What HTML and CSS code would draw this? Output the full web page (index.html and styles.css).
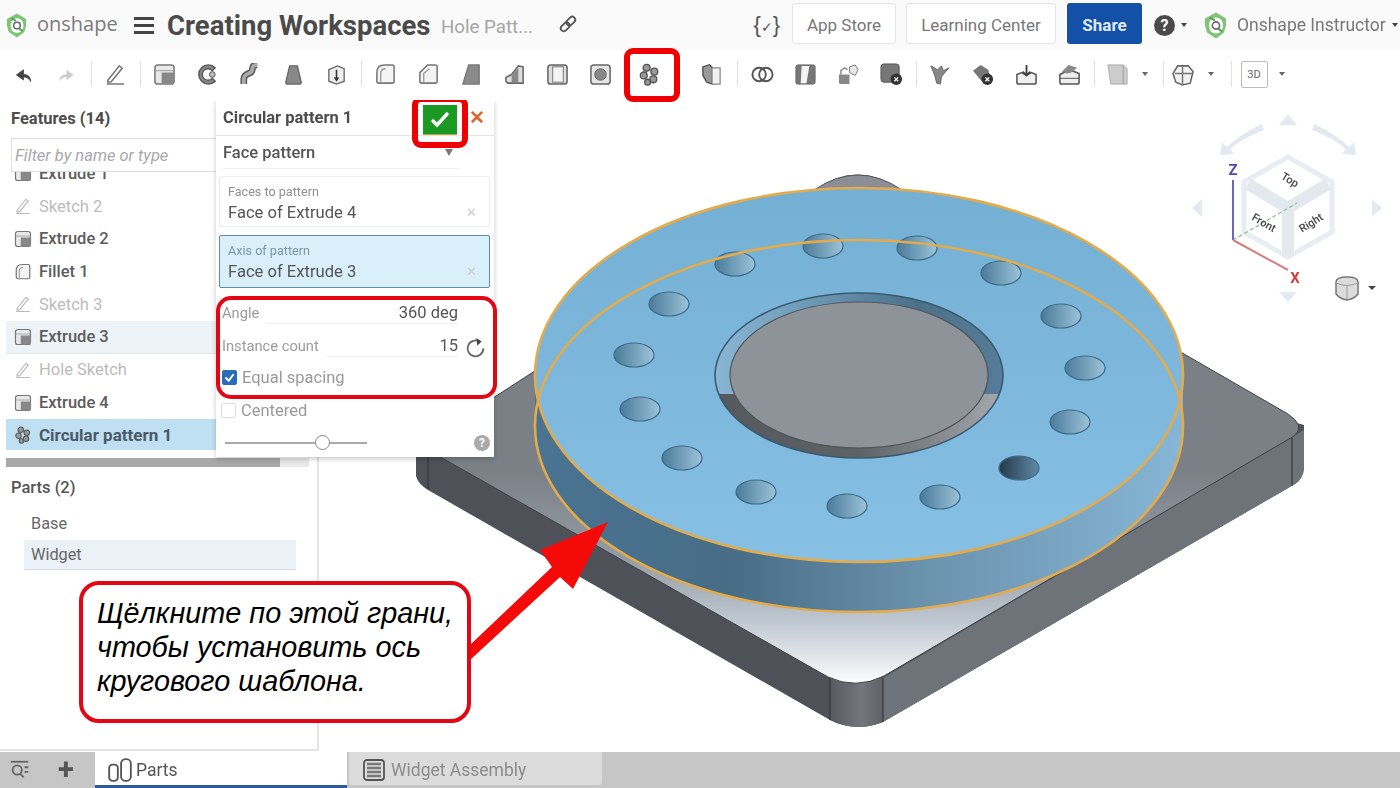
FILE: index.html
```html
<!DOCTYPE html>
<html lang="en">
<head>
<meta charset="utf-8">
<title>Creating Workspaces</title>
<link rel="stylesheet" href="styles.css">
</head>
<body>
<svg class="defs" width="0" height="0" aria-hidden="true">
  <defs>
    <symbol id="logo" viewBox="0 0 24 28">
      <path d="M12 1 22 7v7l-2 7-8 6-9-6-2-7V7z" fill="#7cc576"/>
      <path d="M12 6c-4 0-7 3-7 8s3 8 7 8 7-3 7-8-3-8-7-8z" fill="#fff"/>
      <circle cx="12" cy="14" r="3.6" fill="none" stroke="#666" stroke-width="1.6"/>
      <path d="M6 6l5 3M18 20l-4-3" stroke="#4c9a48" stroke-width="2"/>
    </symbol>
    <symbol id="i-sketch" viewBox="0 0 24 24"><path d="M4 18 16 3l3 2.5L7.5 19.5 4 20zM3 22h18" fill="none" stroke="#777" stroke-width="1.6"/></symbol>
    <symbol id="i-extrude" viewBox="0 0 24 24"><rect x="2" y="2" width="20" height="20" rx="3" fill="#e8e8e8" stroke="#777" stroke-width="1.6"/><path d="M9 10h13v10a2 2 0 0 1-2 2H9z" fill="#888"/><path d="M2 8h20" stroke="#999"/></symbol>
    <symbol id="i-revolve" viewBox="0 0 24 24"><path d="M20 5a10 10 0 1 0 0 14l-3-3a6 6 0 1 1 0-8z" fill="#888" stroke="#555" stroke-width="1.4"/><circle cx="17" cy="12" r="3" fill="#bbb" stroke="#555"/></symbol>
    <symbol id="i-sweep" viewBox="0 0 24 24"><path d="M5 22v-5c0-3 2-5 5-6s4-2 4-5 2-4 5-4" fill="none" stroke="#555" stroke-width="7"/><path d="M5 22v-5c0-3 2-5 5-6s4-2 4-5 2-4 5-4" fill="none" stroke="#aaa" stroke-width="4"/></symbol>
    <symbol id="i-loft" viewBox="0 0 24 24"><path d="M8 3h8l4 17a2 2 0 0 1-2 2H6a2 2 0 0 1-2-2z" fill="#888" stroke="#666" stroke-width="1.4"/></symbol>
    <symbol id="i-thicken" viewBox="0 0 24 24"><path d="M4 7l9-4 7 3v13l-8 3-8-3z" fill="#eee" stroke="#666" stroke-width="1.4"/><path d="M12 7v10M10 15l2 3 2-3" fill="none" stroke="#333" stroke-width="1.6"/></symbol>
    <symbol id="i-fillet" viewBox="0 0 24 24"><path d="M3 19V10q0-8 8-8h8a2 2 0 0 1 2 2v15a2 2 0 0 1-2 2H5a2 2 0 0 1-2-2z" fill="#f4f4f4" stroke="#777" stroke-width="1.6"/><path d="M7 21v-10q0-5 5-5" fill="none" stroke="#999" stroke-width="1.4"/></symbol>
    <symbol id="i-chamfer" viewBox="0 0 24 24"><path d="M3 19V10l8-8h8a2 2 0 0 1 2 2v15a2 2 0 0 1-2 2H5a2 2 0 0 1-2-2z" fill="#f4f4f4" stroke="#777" stroke-width="1.6"/><path d="M7 21V11l6-5" fill="none" stroke="#999" stroke-width="1.4"/></symbol>
    <symbol id="i-draft" viewBox="0 0 24 24"><path d="M9 2h11v20H3z" fill="#8a8a8a" stroke="#777" stroke-width="1.4"/></symbol>
    <symbol id="i-rib" viewBox="0 0 24 24"><path d="M3 15l6-3 7-9 5 1v17H5l-2-2z" fill="#ddd" stroke="#666" stroke-width="1.6"/><path d="M9 20V13l7-8v15z" fill="#888"/></symbol>
    <symbol id="i-shell" viewBox="0 0 24 24"><rect x="2" y="2" width="20" height="20" rx="3" fill="#ddd" stroke="#666" stroke-width="1.6"/><rect x="7" y="4" width="11" height="16" fill="#f4f4f4" stroke="#777"/></symbol>
    <symbol id="i-hole" viewBox="0 0 24 24"><rect x="2" y="2" width="20" height="20" rx="3" fill="#e6e6e6" stroke="#666" stroke-width="1.6"/><circle cx="12" cy="12" r="6" fill="#888" stroke="#666"/></symbol>
    <symbol id="i-pattern" viewBox="0 0 24 24"><g fill="#999" stroke="#555" stroke-width="1.4"><circle cx="9" cy="5" r="3.6"/><circle cx="17" cy="9" r="3.6"/><circle cx="6" cy="13" r="3.6"/><circle cx="16" cy="17" r="3.6"/><circle cx="10" cy="20" r="3"/></g></symbol>
    <symbol id="i-modify" viewBox="0 0 24 24"><path d="M3 4l7-2 3 3v17l-6-2-4-7z" fill="#999" stroke="#555" stroke-width="1.5"/><path d="M13 5h8v17h-8" fill="#f2f2f2" stroke="#888" stroke-width="1.3"/></symbol>
    <symbol id="i-bool" viewBox="0 0 24 24"><circle cx="8.500" cy="12" r="7" fill="#fff" stroke="#555" stroke-width="2"/><circle cx="15.500" cy="12" r="7" fill="none" stroke="#555" stroke-width="2"/></symbol>
    <symbol id="i-split" viewBox="0 0 24 24"><rect x="2" y="2" width="20" height="20" rx="2" fill="#777" stroke="#666"/><path d="M8 3h8l-3 18H7z" fill="#f5f5f5"/></symbol>
    <symbol id="i-transform" viewBox="0 0 24 24"><path d="M2 12h11v10H4a2 2 0 0 1-2-2z" fill="#888"/><path d="M13 4l6-2 3 5-3 6-6-3z" fill="#e8e8e8" stroke="#777"/><path d="M4 12V8l4-3 3 2" fill="none" stroke="#888" stroke-width="1.5"/></symbol>
    <symbol id="i-delete" viewBox="0 0 24 24"><rect x="1" y="1" width="19" height="19" rx="3" fill="#777" stroke="#555"/><circle cx="17" cy="17" r="6" fill="#333"/><path d="M15 15l4 4m0-4-4 4" stroke="#fff" stroke-width="1.4"/></symbol>
    <symbol id="i-moveface" viewBox="0 0 24 24"><path d="M2 3l7 4 4-4 2 5 6-3-8 9-1 8-4-1-2-8z" fill="#888" stroke="#666"/></symbol>
    <symbol id="i-delface" viewBox="0 0 24 24"><path d="M1 8l8-6 8 5 2 7-8 6z" fill="#777"/><circle cx="16" cy="17" r="6" fill="#333"/><path d="M14 15l4 4m0-4-4 4" stroke="#fff" stroke-width="1.4"/></symbol>
    <symbol id="i-replace" viewBox="0 0 24 24"><path d="M2 12l5-2 5 3 5-3 5 2v8a2 2 0 0 1-2 2H4a2 2 0 0 1-2-2z" fill="#f0f0f0" stroke="#555" stroke-width="1.6"/><path d="M12 2v10M8 9l4 4 4-4" fill="none" stroke="#444" stroke-width="2"/></symbol>
    <symbol id="i-offset" viewBox="0 0 24 24"><path d="M2 12l10-5 10 4v9a2 2 0 0 1-2 2H4a2 2 0 0 1-2-2z" fill="#eee" stroke="#555" stroke-width="1.6"/><path d="M4 9l7-7 9 3-6 5-5 1z" fill="#888"/><path d="M2 16h20" stroke="#555"/></symbol>
    <symbol id="i-plane" viewBox="0 0 24 24"><path d="M2 2h16l4 4v16H5z" fill="#ccc" stroke="#aaa"/><path d="M18 2v20" stroke="#999"/></symbol>
    <symbol id="i-mate" viewBox="0 0 24 24"><path d="M6 3h11l5 6-3 12-8 2-7-3-3-9z" fill="#f2f2f2" stroke="#666" stroke-width="1.6"/><path d="M11 3v20M3 11h18" stroke="#777" stroke-width="1.5"/></symbol>
    <symbol id="i-parts" viewBox="0 0 24 24"><rect x="2" y="7" width="8" height="15" rx="3" fill="#fff" stroke="#555" stroke-width="1.7"/><rect x="13" y="2" width="9" height="20" rx="4" fill="#fff" stroke="#555" stroke-width="1.7"/></symbol>
    <symbol id="i-assembly" viewBox="0 0 24 24"><rect x="2" y="2" width="20" height="20" rx="3" fill="#ddd" stroke="#555" stroke-width="1.8"/><path d="M5 6h14M5 10h14M5 14h14M5 18h14" stroke="#777" stroke-width="2.500"/></symbol>
  </defs>
</svg>

<div class="page">
  <div class="app">
    <header class="topbar">
      <svg class="brand-logo"><use href="#logo"/></svg>
      <span class="brand-name">onshape</span>
      <div class="burger"><i></i><i></i><i></i></div>
      <h1 class="doc-title">Creating Workspaces</h1>
      <span class="doc-sub">Hole Patt...</span>
      <svg class="link-icon" viewBox="0 0 20 20"><g fill="none" stroke="#555" stroke-width="1.8" transform="rotate(-45 10 10)"><rect x="1" y="7" width="10" height="6" rx="3"/><rect x="9" y="7" width="10" height="6" rx="3"/></g></svg>
      <span class="spacer"></span>
      <span class="vars">{<b>✓</b>}</span>
      <a class="btn btn-store">App Store</a>
      <a class="btn btn-learn">Learning Center</a>
      <a class="btn btn-share">Share</a>
      <span class="help">?</span>
      <span class="tri tri-help"></span>
      <svg class="user-logo"><use href="#logo"/></svg>
      <span class="user-name">Onshape Instructor</span>
      <span class="tri tri-user"></span>
    </header>

    <nav class="toolbar">
      <div class="tool"><svg class="ico-s" viewBox="0 0 24 24"><path d="M21 21c0-6-3-9-9-9V6L3 12.500l9 6.500v-4c4 0 7 2 9 5.500z" fill="#444" stroke="#444"/></svg></div>
      <div class="tool"><svg class="ico-s" viewBox="0 0 24 24"><path d="M3 21c0-6 3-9 9-9V6l9 6.500-9 6.500v-4c-4 0-7 2-9 5.500z" fill="#ccc"/></svg></div>
      <span class="sep"></span>
      <div class="tool"><svg class="ico"><use href="#i-sketch"/></svg></div>
      <span class="sep"></span>
      <div class="tool"><svg class="ico"><use href="#i-extrude"/></svg></div>
      <div class="tool"><svg class="ico"><use href="#i-revolve"/></svg></div>
      <div class="tool"><svg class="ico"><use href="#i-sweep"/></svg></div>
      <div class="tool"><svg class="ico"><use href="#i-loft"/></svg></div>
      <div class="tool"><svg class="ico"><use href="#i-thicken"/></svg></div>
      <span class="sep"></span>
      <div class="tool"><svg class="ico"><use href="#i-fillet"/></svg></div>
      <div class="tool"><svg class="ico"><use href="#i-chamfer"/></svg></div>
      <div class="tool"><svg class="ico"><use href="#i-draft"/></svg></div>
      <div class="tool"><svg class="ico"><use href="#i-rib"/></svg></div>
      <div class="tool"><svg class="ico"><use href="#i-shell"/></svg></div>
      <div class="tool"><svg class="ico"><use href="#i-hole"/></svg></div>
      <div class="tool tool-marked"><svg class="ico"><use href="#i-pattern"/></svg><span class="mark mark-tool"></span></div>
      <div class="tool tool-after"><svg class="ico"><use href="#i-modify"/></svg></div>
      <span class="sep sep-wide"></span>
      <div class="tool"><svg class="ico"><use href="#i-bool"/></svg></div>
      <div class="tool"><svg class="ico"><use href="#i-split"/></svg></div>
      <div class="tool"><svg class="ico"><use href="#i-transform"/></svg></div>
      <div class="tool"><svg class="ico"><use href="#i-delete"/></svg></div>
      <span class="sep"></span>
      <div class="tool"><svg class="ico"><use href="#i-moveface"/></svg></div>
      <div class="tool"><svg class="ico"><use href="#i-delface"/></svg></div>
      <div class="tool"><svg class="ico"><use href="#i-replace"/></svg></div>
      <div class="tool"><svg class="ico"><use href="#i-offset"/></svg></div>
      <span class="sep"></span>
      <div class="tool tool-s tool-gap"><svg class="ico"><use href="#i-plane"/></svg></div>
      <div class="drop"><span class="tri"></span></div>
      <span class="sep sep-tight"></span>
      <div class="tool tool-s"><svg class="ico"><use href="#i-mate"/></svg></div>
      <div class="drop"><span class="tri"></span></div>
      <span class="sep sep-3d"></span>
      <div class="tool tool-s tool-gap"><span class="btn-3d">3D</span></div>
      <div class="drop"><span class="tri"></span></div>
    </nav>

    <main class="workspace">
      <svg class="model" viewBox="0 100 1400 652" width="1400" height="652">
        <defs>
          <linearGradient id="plateTop" x1="0" y1="470" x2="0" y2="684" gradientUnits="userSpaceOnUse">
            <stop offset="0" stop-color="#7b8087"/><stop offset=".42" stop-color="#959ca5"/><stop offset=".72" stop-color="#c2cad3"/><stop offset="1" stop-color="#fdfeff"/>
          </linearGradient>
          <linearGradient id="plateCorner" x1="0" x2="1" y1="0" y2="0">
            <stop offset="0" stop-color="#565a5f"/><stop offset=".6" stop-color="#73777c"/><stop offset="1" stop-color="#5d6166"/>
          </linearGradient>
          <linearGradient id="wall" x1="535" x2="1183" y1="0" y2="0" gradientUnits="userSpaceOnUse">
            <stop offset="0" stop-color="#4a7492"/><stop offset=".3" stop-color="#476c86"/><stop offset=".6" stop-color="#6b92ad"/><stop offset="1" stop-color="#86b6d6"/>
          </linearGradient>
          <linearGradient id="face" x1="0" y1="190" x2="0" y2="562" gradientUnits="userSpaceOnUse">
            <stop offset="0" stop-color="#74afd4"/><stop offset="1" stop-color="#86c0e4"/>
          </linearGradient>
          <linearGradient id="hole" x1="0" x2="1" y1="0" y2="0">
            <stop offset="0" stop-color="#4a7b99"/><stop offset="1" stop-color="#9cc3da"/>
          </linearGradient>
          <linearGradient id="holeDark" x1="0" x2="1" y1="0" y2="0">
            <stop offset="0" stop-color="#24394a"/><stop offset="1" stop-color="#5f8aa5"/>
          </linearGradient>
          <linearGradient id="bore" x1="715" x2="1003" y1="0" y2="0" gradientUnits="userSpaceOnUse">
            <stop offset="0" stop-color="#8ab6d3"/><stop offset=".3" stop-color="#6f9cb9"/><stop offset=".7" stop-color="#4c7089"/><stop offset="1" stop-color="#557c98"/>
          </linearGradient>
          <linearGradient id="boreLow" x1="715" x2="1003" y1="0" y2="0" gradientUnits="userSpaceOnUse">
            <stop offset="0" stop-color="#55595d"/><stop offset=".5" stop-color="#5d6267"/><stop offset="1" stop-color="#a6a9ad"/>
          </linearGradient>
          <clipPath id="boreClip"><ellipse cx="859" cy="375.500" rx="144" ry="82.500"/></clipPath>
        </defs>
        <path d="M416 440V476Q418 484 428 490L830 720Q856 733 883 722L1295 484Q1304 478 1304 466V425L860 300Z" fill="#4e5258"/>
        <path d="M883 678L1304 430V466Q1304 478 1295 484L883 722Z" fill="#6e7379"/>
        <path d="M830 678H883V722Q856 733 830 720Z" fill="url(#plateCorner)"/>
        <path d="M428 450V489M830 678V720M883 678V722M1292 438V486" stroke="#34383c" stroke-width="1.200" fill="none"/>
        <path d="M428 440L815 190Q858 160 900 190L1288 414Q1306 426 1294 436L884 676Q856 690 828 677L428 450Z" fill="url(#plateTop)" stroke="#3e4246" stroke-width="1"/>
        <path d="M814 190Q858 160 902 190Z" fill="#8b8f95" stroke="#55595e"/>
        <path d="M535 375V426A324 186 0 0 0 1183 426V375Z" fill="url(#wall)"/>
        <ellipse cx="859" cy="375" rx="324" ry="187" fill="url(#face)"/>
        <ellipse cx="859" cy="375.500" rx="144" ry="82.500" fill="url(#bore)"/>
        <path d="M726 405Q790 470 860 460T992 405Q1010 460 860 470T726 405Z" fill="url(#boreLow)" clip-path="url(#boreClip)"/>
        <rect x="715" y="394" width="290" height="70" fill="url(#boreLow)" clip-path="url(#boreClip)"/>
        <ellipse cx="859" cy="375.500" rx="144" ry="82.500" fill="none" stroke="#3a5a70" stroke-width="1.600"/>
        <ellipse cx="859" cy="375" rx="129" ry="73" fill="#8e9399" stroke="#50555a" stroke-width="1.200"/>
        <g fill="url(#hole)" stroke="#3d6a85" stroke-width="1.200">
          <ellipse cx="823" cy="246" rx="20" ry="12"/><ellipse cx="917" cy="248" rx="20" ry="12"/>
          <ellipse cx="1001" cy="273" rx="20" ry="12"/><ellipse cx="1061" cy="316" rx="20" ry="12"/>
          <ellipse cx="1085" cy="368" rx="20" ry="12"/><ellipse cx="1070" cy="422" rx="20" ry="12"/>
          <ellipse cx="1019" cy="468" rx="20" ry="12" fill="url(#holeDark)"/><ellipse cx="940" cy="497" rx="20" ry="12"/>
          <ellipse cx="847" cy="506" rx="20" ry="12"/><ellipse cx="756" cy="492" rx="20" ry="12"/>
          <ellipse cx="682" cy="458" rx="20" ry="12"/><ellipse cx="640" cy="409" rx="20" ry="12"/>
          <ellipse cx="634" cy="355" rx="20" ry="12"/><ellipse cx="669" cy="304" rx="20" ry="12"/>
          <ellipse cx="735" cy="264" rx="20" ry="12"/>
        </g>
        <g fill="none" stroke="#e3ab4c" stroke-width="2.600">
          <ellipse cx="859" cy="375" rx="324" ry="187"/>
          <ellipse cx="859" cy="426" rx="324" ry="186"/>
        </g>

        <g class="cube">
          <path d="M1288 114l9 11h-18zM1202 199v18l-10-9zM1372 199v18l10 -9zM1279 292h18l-9 10z" fill="#e3e9f0"/>
          <path d="M1262 124q-22 10-35 23l-5 -5-2 13 14-1-4-5q13-11 34-19zM1314 124q22 10 35 23l5-5 2 13-14-1 4-5q-13-11-34-19z" fill="#e3e9f0"/>
          <path d="M1288 157l44 25v50l-44 25-44-25v-50z" fill="#fff" stroke="#e8edf3" stroke-width="5" stroke-linejoin="round"/>
          <path d="M1288 208l-40-24M1288 208l40-24M1288 208v48" stroke="#e3e9ef" stroke-width="12" fill="none"/>
          <path d="M1233 240L1297 203" stroke="#7dc87d" stroke-width="1.200" stroke-dasharray="4 2.500"/>
          <path d="M1233 180V240" stroke="#6668c0" stroke-width="2"/>
          <path d="M1233 240L1288 270" stroke="#d88080" stroke-width="2"/>
          <text x="1233" y="175" class="axis axis-z">Z</text>
          <text x="1295" y="283" class="axis axis-x">X</text>
          <text class="cube-label" transform="translate(1288 183) rotate(32)">Top</text>
          <text class="cube-label" transform="translate(1262 226) rotate(30)">Front</text>
          <text class="cube-label" transform="translate(1313 226) rotate(-32)">Right</text>
          <path d="M1347 277q11 0 11 5v12q-4 5-11 6-7-1-11-6v-12q0-5 11-5z" fill="#dcdcdc" stroke="#777" stroke-width="1.500"/>
          <path d="M1336 283q11 5 22 0M1347 286v13" stroke="#999" fill="none"/>
          <path d="M1368 286h8l-4 4z" fill="#444"/>
        </g>
      </svg>

      <aside class="features">
        <div class="panel-title">Features (14)</div>
        <div class="filter">Filter by name or type</div>
        <ul class="tree">
          <li class="row row-clip"><svg class="row-ico"><use href="#i-extrude"/></svg>Extrude 1</li>
          <li class="row row-off"><svg class="row-ico"><use href="#i-sketch"/></svg>Sketch 2</li>
          <li class="row"><svg class="row-ico"><use href="#i-extrude"/></svg>Extrude 2</li>
          <li class="row"><svg class="row-ico"><use href="#i-fillet"/></svg>Fillet 1</li>
          <li class="row row-off"><svg class="row-ico"><use href="#i-sketch"/></svg>Sketch 3</li>
          <li class="row row-hover"><svg class="row-ico"><use href="#i-extrude"/></svg>Extrude 3</li>
          <li class="row row-off"><svg class="row-ico"><use href="#i-sketch"/></svg>Hole Sketch</li>
          <li class="row"><svg class="row-ico"><use href="#i-extrude"/></svg>Extrude 4</li>
          <li class="row row-active"><svg class="row-ico"><use href="#i-pattern"/></svg>Circular pattern 1</li>
        </ul>
        <div class="scrollbar"><span></span></div>
        <div class="parts-title">Parts (2)</div>
        <div class="part">Base</div>
        <div class="part part-on">Widget</div>
      </aside>

      <section class="dialog">
        <div class="dlg-head">
          <span class="dlg-title">Circular pattern 1</span>
          <span class="ok"><svg viewBox="0 0 24 24"><path d="M4 13l5 5L20 6" fill="none" stroke="#fff" stroke-width="3.400"/></svg><span class="mark mark-ok"></span></span>
          <span class="cancel">✕</span>
        </div>
        <div class="dlg-select"><span>Face pattern</span><span class="sel-tri"></span></div>
        <div class="qbox"><small>Faces to pattern</small><div class="qval"><span>Face of Extrude 4</span><em>✕</em></div></div>
        <div class="qbox qbox-on"><small>Axis of pattern</small><div class="qval"><span>Face of Extrude 3</span><em>✕</em></div></div>
        <div class="dlg-marked">
          <span class="mark mark-fields"></span>
          <div class="field"><label>Angle</label><span class="fval">360 deg</span></div>
          <div class="field field-count"><label>Instance count</label><span class="fval">15</span>
            <svg class="reverse" viewBox="0 0 24 24"><path d="M17 5.500A9 9 0 1 0 21 13" fill="none" stroke="#666" stroke-width="2"/><path d="M13 1l6 4-5 5z" fill="#444"/></svg>
          </div>
          <div class="check"><span class="box box-on"><svg viewBox="0 0 16 16"><path d="M3 8l4 4 6-8" fill="none" stroke="#fff" stroke-width="2.400"/></svg></span>Equal spacing</div>
        </div>
        <div class="check check-off"><span class="box"></span>Centered</div>
        <div class="dlg-foot">
          <div class="slider"><span></span></div>
          <span class="qhelp">?</span>
        </div>
      </section>
    </main>

    <footer class="tabbar">
      <svg class="tab-search" viewBox="0 0 24 24"><path d="M2 3h19" stroke="#666" stroke-width="2"/><circle cx="9" cy="12" r="5" fill="none" stroke="#666" stroke-width="2"/><path d="M12 16l4 4M17 9h4M17 14h4" stroke="#666" stroke-width="2"/></svg>
      <span class="tab-add">+</span>
      <div class="tab tab-on"><svg class="tab-ico"><use href="#i-parts"/></svg>Parts</div>
      <div class="tab tab-off"><svg class="tab-ico"><use href="#i-assembly"/></svg>Widget Assembly</div>
    </footer>
  </div>

  <svg class="arrow" viewBox="0 0 170 150" width="170" height="150"><path d="M138 2L70 30l12 17L0 125v15L90 57l13 12z" fill="#f50a0a"/></svg>
  <div class="callout">Щёлкните по этой грани,<br>чтобы установить ось<br>кругового шаблона.</div>
</div>
</body>
</html>
```

FILE: styles.css
```css
* { box-sizing: border-box; }
html, body { margin: 0; padding: 0; }
body { background: #fff; font-family: Roboto, "Noto Sans", sans-serif; color: #555; overflow: hidden; }
.defs { position: absolute; }
.page { position: relative; width: 1400px; height: 788px; overflow: hidden; }
.app { display: flex; flex-direction: column; height: 788px; filter: blur(.55px); }

/* top bar */
.topbar { flex: 0 0 50px; display: flex; align-items: center; background: #fafafa; padding: 0 2px 0 6px; }
.brand-logo { width: 22px; height: 27px; margin-right: 9px; }
.brand-name { font-family: "Open Sans", sans-serif; font-size: 20px; color: #7a7a7a; width: 97px; margin-top: -4px; }
.burger { width: 20px; display: flex; flex-direction: column; gap: 4px; margin-right: 13px; }
.burger i { display: block; height: 3px; background: #444; }
.doc-title { margin: 0; font-size: 27.500px; font-weight: 700; color: #4a4a4a; white-space: nowrap; width: 274px; }
.doc-sub { font-size: 18.700px; color: #a5a5a5; white-space: nowrap; width: 117px; margin-top: 4px; }
.link-icon { width: 20px; height: 20px; margin-top: -2px; }
.spacer { flex: 1; }
.vars { font-family: "Liberation Sans", sans-serif; font-size: 22px; font-weight: 400; color: #555; margin-right: 12px; }
.vars b { font-family: "DejaVu Sans", sans-serif; font-size: 14px; font-weight: 400; }
.btn { height: 41px; margin-top: -3px; padding-top: 3px; display: flex; align-items: center; justify-content: center; border-radius: 3px; font-size: 17px; }
.btn-store { width: 104px; background: #fff; border: 1px solid #e5e5e5; color: #777; margin-right: 10px; }
.btn-learn { width: 150px; background: #fff; border: 1px solid #e5e5e5; color: #777; margin-right: 11px; }
.btn-share { width: 75px; background: #1350a8; color: #dfe9f7; font-weight: 700; margin-right: 12px; }
.help { width: 21px; height: 21px; border-radius: 50%; background: #4a4a4a; color: #fff; font-size: 16px; font-weight: 700; display: flex; align-items: center; justify-content: center; }
.tri { display: block; width: 0; height: 0; border-left: 3.500px solid transparent; border-right: 3.500px solid transparent; border-top: 4px solid #666; }
.tri-help { margin: 0 17px 0 6px; border-top-color: #444; }
.user-logo { width: 24px; height: 29px; margin-right: 9px; }
.user-name { font-size: 17.500px; color: #777; white-space: nowrap; width: 149px; }
.tri-user { margin-left: 6px; border-top-color: #444; }

/* toolbar */
.toolbar { flex: 0 0 50px; display: flex; align-items: center; background: #fff; padding: 0 0 2px 2px; position: relative; z-index: 5; }
.tool { flex: 0 0 43px; height: 32px; display: flex; align-items: center; justify-content: center; position: relative; }
.tool-s { flex-basis: 30px; }
.tool-gap { margin-left: 5px; }
.tool-marked { margin-left: 6px; }
.tool-after { margin-left: 19px; }
.ico { width: 23px; height: 23px; }
.ico-s { width: 19px; height: 19px; }
.sep { flex: 0 0 1px; height: 26px; margin: 0 2.500px; background: #e0e0e0; }
.sep-wide { margin: 0 3.500px; }
.sep-tight { margin: 0 4px 0 5px; }
.sep-3d { margin: 0 2px 0 7px; }
.drop { flex: 0 0 26px; display: flex; justify-content: center; }
.btn-3d { width: 27px; height: 27px; border: 1px solid #bbb; font-size: 11px; display: flex; align-items: center; justify-content: center; color: #666; background: #fff; border-radius: 2px; }
.mark { position: absolute; border: 6px solid #ee0000; border-radius: 9px; pointer-events: none; }
.mark-tool { left: -4px; top: -10px; width: 56px; height: 54px; }

/* workspace */
.workspace { flex: 1; position: relative; background: #fff; min-height: 0; }
.model { position: absolute; left: 0; top: 0; }
.features { position: relative; width: 319px; height: 651px; background: #fff; border-right: 2px solid #e4e4e4; border-bottom: 2px solid #e4e4e4; display: flex; flex-direction: column; }
.panel-title { height: 38px; padding: 9px 0 0 11px; font-size: 16.500px; font-weight: 700; color: #4c4c4c; }
.filter { height: 34px; margin-left: 11px; border: 1.500px solid #ddd; border-right: 0; padding: 0 3px; font-style: italic; font-size: 16.500px; color: #a8a8a8; display: flex; align-items: center; white-space: nowrap; }
.tree { list-style: none; margin: 0; padding: 0; height: 278px; overflow: hidden; }
.row { height: 32.750px; display: flex; align-items: center; padding-left: 8px; margin-left: 6px; font-size: 16.500px; font-weight: 500; color: #5c5c5c; gap: 7px; white-space: nowrap; }
.row-clip { margin-top: -15px; }
.row-off { color: #bbb; font-weight: 400; }
.row-off .row-ico { opacity: .5; }
.row-hover { background: #eef3f8; border-bottom: 1px solid #dce4ec; }
.row-active { background: #bfdff2; font-weight: 700; color: #4b5a66; font-size: 17px; }
.row-ico { width: 18px; height: 18px; flex: 0 0 18px; }
.scrollbar { margin: 8px 8px 0 6px; height: 9px; background: #e8e8e8; }
.scrollbar span { display: block; width: 274px; height: 100%; background: #a9a9a9; }
.parts-title { margin-top: 12px; padding-left: 11px; height: 28px; font-size: 16.500px; font-weight: 500; color: #555; line-height: 18px; }
.part { margin: 0 21px 0 24px; padding-left: 7px; height: 32px; font-size: 16.300px; color: #666; display: flex; align-items: center; }
.part-on { background: #eaf1f7; border-bottom: 1px solid #cfdce8; height: 30px; margin-top: 1px; }

/* dialog */
.dialog { position: absolute; left: 216px; top: 0; width: 278px; height: 357px; background: #fff; box-shadow: 0 2px 5px rgba(0,0,0,.22); display: flex; flex-direction: column; }
.dlg-head { height: 36px; flex: 0 0 36px; display: flex; align-items: center; padding: 0 8px 0 7px; border-bottom: 1px solid #e4e4e4; }
.dlg-title { flex: 1; font-size: 16.500px; font-weight: 700; color: #4c4c4c; white-space: nowrap; }
.ok { position: relative; width: 34px; height: 30px; margin-top: 4px; background: #1a9a22; display: flex; align-items: center; justify-content: center; border-bottom: 1px solid #b5a53c; }
.ok svg { width: 24px; height: 24px; }
.mark-ok { left: -11px; top: -9px; width: 56px; height: 52px; }
.cancel { margin-left: 12px; color: #d9692f; font-size: 19px; font-weight: 700; width: 17px; line-height: 1; }
.dlg-select { height: 33px; flex: 0 0 33px; margin: 0 36px 0 7px; border-bottom: 1px solid #eee; display: flex; align-items: center; justify-content: space-between; font-size: 16.500px; font-weight: 500; color: #555; padding-right: 5px; }
.sel-tri { width: 0; height: 0; border-left: 4px solid transparent; border-right: 4px solid transparent; border-top: 7px solid #777; }
.qbox { margin: 7px 4px 0 3px; height: 51px; border: 1px solid #ececec; padding: 8px 8px 0 8px; border-radius: 2px; }
.qbox small { display: block; font-size: 12.600px; color: #8f8f8f; line-height: 14px; }
.qval { display: flex; justify-content: space-between; align-items: center; margin-top: 4px; font-size: 16.600px; color: #555; }
.qval em { font-style: normal; font-size: 13px; color: #ccc; padding-right: 4px; }
.qbox-on { margin-top: 8px; height: 53px; background: #d9eff9; border: 1.500px solid #5a8db0; }
.qbox-on small { color: #7d98a8; }
.dlg-marked { position: relative; height: 103px; margin-top: 8px; padding: 4px 0 0 6px; display: flex; flex-direction: column; }
.mark-fields { left: 0; top: 0; width: 281px; height: 103px; border-width: 4px; border-radius: 15px; border-color: #e30613; }
.field { display: flex; align-items: flex-end; height: 24px; width: 236px; font-size: 14.700px; }
.field label { color: #9b9b9b; flex: 0 0 auto; padding-bottom: 2px; }
.fval { flex: 1; text-align: right; font-size: 16.500px; color: #555; border-bottom: 1px solid #eee; margin-left: 8px; padding-bottom: 1px; }
.field-count { margin-top: 9px; position: relative; }
.reverse { position: absolute; left: 243px; top: 4px; width: 21px; height: 21px; }
.check { display: flex; align-items: center; gap: 5px; font-size: 16.500px; color: #999; margin-top: 11px; white-space: nowrap; }
.box { width: 15px; height: 15px; border: 1.500px solid #ddd; border-radius: 2px; display: block; background: #fff; }
.box-on { background: #2b6cb8; border-color: #2b6cb8; }
.box-on svg { display: block; width: 100%; height: 100%; }
.check-off { margin: 1px 0 0 5px; height: 20px; }
.dlg-foot { flex: 1; display: flex; align-items: center; justify-content: space-between; padding: 8px 4px 0 9px; }
.slider { width: 142px; height: 2px; background: #aaa; position: relative; }
.slider span { position: absolute; left: 90px; top: -7px; width: 15px; height: 15px; border-radius: 50%; border: 1.500px solid #888; background: #fff; }
.qhelp { width: 16px; height: 16px; border-radius: 50%; background: #aaa; color: #fff; font-size: 12px; font-weight: 700; display: flex; align-items: center; justify-content: center; }

/* tabs */
.tabbar { flex: 0 0 36px; display: flex; background: #c6c6c6; align-items: stretch; }
.tab-search { width: 22px; height: 22px; margin: 7px 0 0 9px; }
.tab-add { width: 22px; margin-left: 24px; font-size: 29px; font-weight: 700; line-height: 35px; color: #555; text-align: center; }
.tab { width: 252px; display: flex; align-items: center; font-size: 17.500px; height: 33px; padding-left: 12px; gap: 3px; padding-top: 2px; }
.tab-on { margin-left: 18px; background: #fff; color: #555; height: 36px; border-bottom: 3px solid #2c5c96; }
.tab-on .tab-ico { width: 26px; height: 26px; }
.tab-off { margin-left: 2px; width: 253px; background: #dcdcdc; color: #8c8c8c; border-radius: 0 0 3px 3px; padding-left: 13px; gap: 5px; }
.tab-ico { width: 24px; height: 24px; }

/* annotation */
.callout { position: absolute; left: 79px; top: 581px; width: 392px; height: 142px; background: #fff; border: 4px solid #e30613; border-radius: 20px; padding: 11px 0 0 14px; font-family: "Liberation Sans", Arial, sans-serif; font-style: italic; font-size: 28.800px; line-height: 34px; color: #000; white-space: nowrap; }
.arrow { position: absolute; left: 470px; top: 520px; }
.axis { font-size: 15px; font-weight: 700; text-anchor: middle; font-family: Roboto, sans-serif; }
.axis-z { fill: #4a4db4; }
.axis-x { fill: #d24040; }
.cube-label { font-size: 11px; font-weight: 500; fill: #444; text-anchor: middle; font-family: Roboto, sans-serif; }
```
